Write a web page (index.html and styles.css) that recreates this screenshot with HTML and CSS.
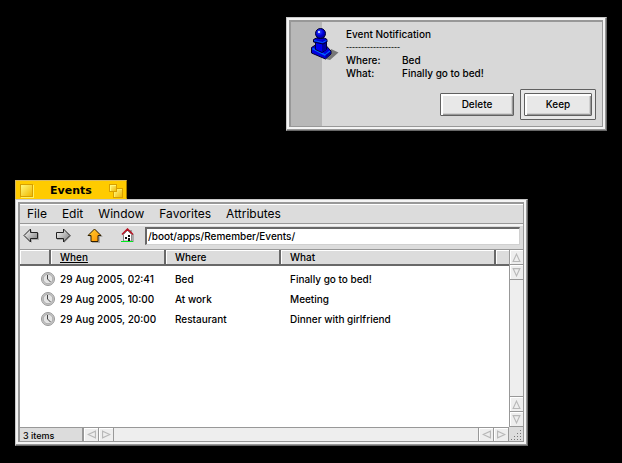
FILE: index.html
```html
<!DOCTYPE html>
<html lang="en"><head><meta charset="utf-8"><title>Events</title><link rel="stylesheet" href="styles.css"></head>
<body>
<svg class="defs" width="0" height="0" aria-hidden="true">
<defs>
<linearGradient id="steel" x1="0" y1="0" x2="1" y2="1"><stop offset="0" stop-color="#fff"/><stop offset="1" stop-color="#777"/></linearGradient>
<linearGradient id="amber" x1="0" y1="0" x2="1" y2="1"><stop offset="0" stop-color="#ffd030"/><stop offset="1" stop-color="#ff9000"/></linearGradient>
<linearGradient id="gold" x1="0" y1="0" x2="1" y2="1"><stop offset="0" stop-color="#fffb90"/><stop offset="1" stop-color="#f0b800"/></linearGradient>
<radialGradient id="ball" cx=".4" cy=".35" r=".6"><stop offset="0" stop-color="#3050ff"/><stop offset=".6" stop-color="#0000e0"/><stop offset="1" stop-color="#000098"/></radialGradient>
</defs>
<symbol id="clock" viewBox="0 0 14 14"><circle cx="7" cy="7" r="6.5" fill="#c8c8c8" stroke="#989898"/><circle cx="7" cy="7" r="4.8" fill="#e4e4e4" stroke="#a0a0a0" stroke-width=".8"/><path d="M6.5 3v4l3 3" fill="none" stroke="#444"/></symbol>
<symbol id="up" viewBox="0 0 8 8"><path d="M4 1L7 7.500H1Z" fill="none" stroke="#b8b8b8"/></symbol>
</svg>

<section class="alert frame">
<div class="alert-body">
<div class="stripe"><svg class="pawn" width="28" height="34" viewBox="0 0 28 34"><path d="M15 32l5-5V22l7.500 3.500L19 33z" fill="#777"/><path d="M.5 20.500l4-2.500h10l5.500 6v3l-5.500 5L.5 26z" fill="#0000e0" stroke="#000030"/><path d="M1.500 21.500l12.500 6.500 5-4" fill="none" stroke="#0060ff" stroke-width="1.500"/><path d="M14.500 28v3.500l5-4.500v-2.500z" fill="#0000a0"/><path d="M4.500 14h11v8.500l-4.500 3-6.500-3z" fill="#0000f0" stroke="#000040"/><path d="M11 16h4v6.500l-4 2.500z" fill="#0000a0"/><path d="M2.500 12.500l3-1.500h8l2.500 1.500V15l-4 2-9.500-2z" fill="#0000d8" stroke="#000030"/><path d="M3 13.500l8.500 2 4-2" fill="none" stroke="#0060ff"/><circle cx="9.500" cy="6.500" r="5" fill="url(#ball)" stroke="#000030"/><path d="M7 4h2v2H7z" fill="#c0c8ff"/></svg></div>
<div class="message">
<p>Event Notification</p><p class="rule">------------------</p>
<dl><dt>Where:</dt><dd>Bed</dd><dt>What:</dt><dd>Finally go to bed!</dd></dl>
<div class="actions"><button class="push">Delete</button><span class="default"><button class="push">Keep</button></span></div>
</div></div>
</section>

<main class="window">
<header class="tab"><button class="close" aria-label="Close"></button><h1>Events</h1><button class="zoom" aria-label="Zoom"><svg width="14" height="14" viewBox="0 0 14 14" shape-rendering="crispEdges"><path d="M4.500 4.500h9v9h-9z" fill="url(#gold)" stroke="#d8a000"/><path d="M5.500 12.500v-7h7M4 14h10V4" fill="none" stroke="#fff060"/><path d="M.5.500h7v7h-7z" fill="url(#gold)" stroke="#d8a000"/><path d="M1.500 6.500v-5h5" fill="none" stroke="#fff878"/></svg></button></header>
<div class="frame pane"><div class="content">
<nav class="menu"><a href="#">File</a><a href="#">Edit</a><a href="#">Window</a><a href="#">Favorites</a><a href="#">Attributes</a></nav>
<div class="toolbar">
<button class="tool" aria-label="Back"><svg width="17" height="15" viewBox="0 0 17 15"><path d="M2 8l7-6v3h7v7H9v3z" fill="#aaa"/><path d="M1 7.500L7.500 1v3.500h7v6h-7V14z" fill="url(#steel)" stroke="#222"/></svg></button>
<button class="tool" aria-label="Forward"><svg width="17" height="15" viewBox="0 0 17 15"><path d="M16 8l-7 7v-3H2V5h7V2z" fill="#aaa"/><path d="M15 7.500L8.500 1v3.500h-7v6h7V14z" fill="url(#steel)" stroke="#222"/></svg></button>
<button class="tool" aria-label="Up"><svg width="17" height="15" viewBox="0 0 17 15"><path d="M9 2l7 7h-3v6H5V9H2z" fill="#aaa"/><path d="M7.500 1L14 7.500h-3v6H4v-6H1z" fill="url(#amber)" stroke="#302000"/></svg></button>
<button class="tool" aria-label="Home"><svg width="14" height="15" viewBox="0 0 14 15"><path d="M11 6h2v8h-2z" fill="#aaa"/><path d="M2.500 6.500L6.500 2.500l4 4V13h-8z" fill="#fff" stroke="#888"/><path d="M10 2v3" stroke="#888" stroke-width="1.500"/><path d="M1 6.500L6.500 1 12 6.500" fill="none" stroke="#b81020" stroke-width="1.500"/><path d="M4 9h2v2H4zM7 7h2v2H7zM7 10h2v3H7z" fill="#111"/><path d="M0 13h12v1H0z" fill="#00e820"/></svg></button>
<input class="path" aria-label="Location" value="/boot/apps/Remember/Events/">
</div>
<div class="browser">
<div class="list"><table><colgroup><col class="c-icon"><col class="c-when"><col class="c-where"><col class="c-what"><col class="c-end"></colgroup>
<thead><tr><th></th><th><u>When</u></th><th>Where</th><th>What</th><th></th></tr></thead>
<tbody>
<tr><td><svg class="clock"><use href="#clock"/></svg></td><td>29 Aug 2005, 02:41</td><td>Bed</td><td colspan="2">Finally go to bed!</td></tr>
<tr><td><svg class="clock"><use href="#clock"/></svg></td><td>29 Aug 2005, 10:00</td><td>At work</td><td colspan="2">Meeting</td></tr>
<tr><td><svg class="clock"><use href="#clock"/></svg></td><td>29 Aug 2005, 20:00</td><td>Restaurant</td><td colspan="2">Dinner with girlfriend</td></tr>
</tbody></table></div>
<div class="bar vertical"><button class="step" aria-label="Scroll up"><svg><use href="#up"/></svg></button><button class="step down" aria-label="Scroll down"><svg><use href="#up"/></svg></button><span class="track"></span><button class="step" aria-label="Scroll up"><svg><use href="#up"/></svg></button><button class="step down" aria-label="Scroll down"><svg><use href="#up"/></svg></button></div>
<div class="bar horizontal"><span class="status">3 items</span><button class="step left" aria-label="Scroll left"><svg><use href="#up"/></svg></button><button class="step right" aria-label="Scroll right"><svg><use href="#up"/></svg></button><span class="track"></span><button class="step left" aria-label="Scroll left"><svg><use href="#up"/></svg></button><button class="step right" aria-label="Scroll right"><svg><use href="#up"/></svg></button></div>
<svg class="grip" viewBox="0 0 14 14" shape-rendering="crispEdges"><path d="M11 3h1M8 6h1M11 6h1M5 9h1M8 9h1M11 9h1M2 12h1M5 12h1M8 12h1M11 12h1" transform="translate(0 .5)" stroke="#777"/></svg>
</div>
</div></div>
</main>
</body></html>
```
FILE: styles.css
```css
* { box-sizing: border-box; }
body { margin: 0; min-height: 100vh; background: #000; color: #000; font: 500 10px/13px Inter, "Liberation Sans", sans-serif; }
button { margin: 0; padding: 0; border: 0; background: none; font: inherit; color: inherit; }
svg { display: block; }
p, dl, dd, h1 { margin: 0; }
.defs { position: absolute; }

.frame { padding: 2px 3px 3px 2px; border: 1px solid; border-color: #c8c8c8 #686868 #686868 #c8c8c8; background: #f4f4f4; box-shadow: inset -1px -1px #989898; }

.alert { position: absolute; top: 17px; left: 286px; right: 15px; }
.alert-body { display: flex; border: solid #989898; border-width: 2px 1px 1px 2px; background: #d8d8d8; }
.stripe { width: 31px; background: #b8b8b8; }
.pawn { margin: 5px 0 0 20px; }
.message { flex: 1; padding: 6px 6px 6px 24px; }
.rule { font-family: "Liberation Sans", sans-serif; font-size: 9px; }
dl { display: grid; grid-template-columns: 56px 1fr; }
.actions { display: flex; justify-content: flex-end; align-items: center; gap: 6px; margin-top: 9px; }
.push { width: 74px; height: 23px; border: 1px solid #606060; border-radius: 1px; background: #e8e8e8; box-shadow: inset 2px 2px #fff, inset -1px -1px #989898, inset -2px -2px #d0d0d0; }
.default { padding: 3px; border: 1px solid #606060; border-radius: 1px; background: #e8e8e8; }
.default .push { width: 68px; }

.window { position: absolute; top: 180px; right: 94px; bottom: 17px; left: 15px; display: flex; flex-direction: column; }
.tab { display: flex; align-items: center; justify-content: space-between; width: 112px; height: 19px; padding: 2px 3px 0 4px; border: 1px solid; border-color: #d8b860 #a07800 #ffcb00 #d8b860; background: #ffcb00; }
h1 { font: bold 11px/16px "DejaVu Sans", sans-serif; }
.close { width: 13px; height: 13px; border: 1px solid #d8a000; background: linear-gradient(135deg, #fff878, #f0b800); box-shadow: 1px 1px #fff060; }
.pane { flex: 1; display: flex; }
.content { flex: 1; display: flex; flex-direction: column; border: solid #989898; border-width: 2px 1px 1px 2px; background: #dcdcdc; }
.menu { display: flex; gap: 15px; height: 20px; padding: 0 7px; border: solid; border-width: 1px 0; border-color: #fff transparent #989898; font-size: 12px; line-height: 18px; font-weight: 400; }
.menu a { color: inherit; text-decoration: none; }
.toolbar { display: flex; align-items: center; gap: 15px; height: 26px; padding: 0 3px 4px; border: solid; border-width: 2px 0 1px; border-color: #f4f4f4 transparent #989898; }
.tool { width: 17px; height: 15px; }
.tool svg { margin: auto; }
.path { flex: 1; min-width: 0; height: 18px; margin-left: -6px; padding: 0 1px 1px; border: 2px solid; border-width: 2px 1px 1px 2px; border-color: #686868 #d0d0d0 #d0d0d0 #686868; background: #fff; font: inherit; }
.browser { flex: 1; display: grid; grid-template: 1fr 14px / 1fr 14px; background: #fff; }
table { width: 100%; table-layout: fixed; border-collapse: separate; border-spacing: 0; }
.c-icon { width: 31px; } .c-when, .c-where { width: 115px; } .c-end { width: 13px; }
th { height: 16px; padding: 1px 9px 0; border: solid #686868; border-width: 0 2px 2px 0; background: #dcdcdc; box-shadow: inset 1px 1px #fff; text-align: left; font-weight: 500; line-height: 13px; }
th:last-child { border-right: 0; }
th:first-child, th:last-child { padding: 0; }
td { height: 20px; padding: 0 9px; white-space: nowrap; }
tbody tr:first-child td { height: 23px; padding-top: 3px; }
td:first-child { padding: 0; }
.clock { width: 14px; height: 14px; margin-left: 21px; }
.bar { display: flex; background: #eee; }
.vertical { flex-direction: column; border-left: 1px solid #989898; }
.horizontal { border-top: 1px solid #989898; }
.step { display: grid; place-items: center; width: 15px; height: 13px; border-right: 1px solid #989898; box-shadow: inset 1px 1px #fff; }
.vertical .step { width: 13px; height: 15px; border-right: 0; border-bottom: 1px solid #989898; }
.step svg { width: 9px; height: 9px; }
.down svg { transform: rotate(180deg); } .left svg { transform: rotate(-90deg); } .right svg { transform: rotate(90deg); }
.track { flex: 1; }
.vertical .track { border-bottom: 1px solid #989898; }
.horizontal .track { border-right: 1px solid #989898; }
.status { width: 64px; padding-left: 3px; border-right: 2px solid #989898; background: #dcdcdc; font-size: 9px; line-height: 15px; }
.grip { width: 14px; height: 14px; background: #dcdcdc; }
```
